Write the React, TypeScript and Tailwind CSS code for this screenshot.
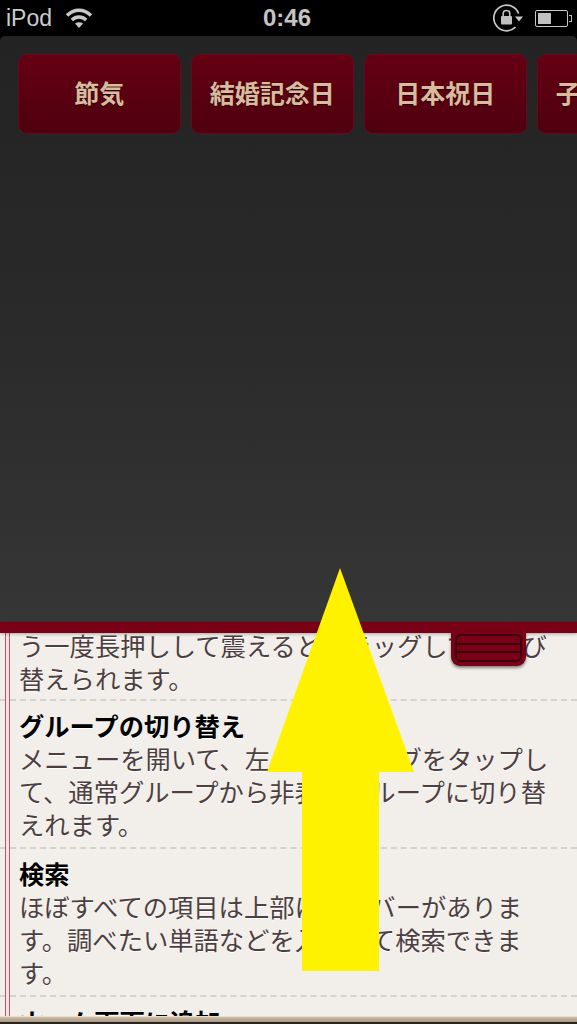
import React from "react";

const jp = "font-['Noto_Sans_CJK_JP','Liberation_Sans',sans-serif]";

const sections: { title?: string; lines: string[] }[] = [
  { lines: ["う一度長押しして震えるとドラッグして、並び", "替えられます。"] },
  {
    title: "グループの切り替え",
    lines: ["メニューを開いて、左上の表示タブをタップし", "て、通常グループから非表示グループに切り替", "えれます。"],
  },
  {
    title: "検索",
    lines: ["ほぼすべての項目は上部に検索バーがありま", "す。調べたい単語などを入力して検索できま", "す。"],
  },
  { title: "ホーム画面に追加", lines: [] },
];

function Wifi() {
  return (
    <svg width="28" height="22" viewBox="0 0 28 22" fill="none" stroke="#c8c8c8" strokeWidth="3.4">
      <path d="M2 8.5C9 1.5 19 1.5 26 8.5" />
      <path d="M6.8 13C11 9 17 9 21.2 13" />
      <path d="M14 21l-4-4.4c2.4-1.9 5.6-1.9 8 0z" fill="#c8c8c8" stroke="none" />
    </svg>
  );
}

function RotationLock() {
  return (
    <svg width="31" height="28" viewBox="0 0 31 28" fill="none">
      <path d="M22.5 23.2A12.8 12.8 0 1 1 25.6 9.5" stroke="#c8c8c8" strokeWidth="1.7" />
      <path d="M22 12.5h8l-4 5z" fill="#c8c8c8" />
      <rect x="8" y="12" width="11" height="8.5" rx="1" fill="#c0c0c0" />
      <path d="M10.2 12V9.8a3.3 3.3 0 0 1 6.6 0V12" stroke="#c0c0c0" strokeWidth="1.6" />
    </svg>
  );
}

function Battery() {
  return (
    <div className="flex items-center">
      <div className="w-[33px] h-[17px] border border-[#c8c8c8] rounded-[2px] p-[2px] flex">
        <div className="w-[13px] h-full bg-[#c0c0c0]" />
      </div>
      <div className="w-[3px] h-[7px] border border-l-0 border-[#bbbbbb] ml-[1px]" />
    </div>
  );
}

export default function App() {
  return (
    <div className="relative w-[577px] h-[1024px] overflow-hidden bg-black flex flex-col">
      {/* status bar */}
      <div className="h-[36px] shrink-0 flex items-center justify-between pl-[6px] pr-[5px] relative">
        <div className="flex items-center gap-[13px]">
          <span className="font-['Liberation_Sans',sans-serif] text-[23px] text-[#cccccc]">iPod</span>
          <Wifi />
        </div>
        <span className="absolute left-[263px] top-[4px] font-['Liberation_Sans',sans-serif] font-bold text-[24px] leading-[28px] text-[#c4c4c4]">0:46</span>
        <div className="flex items-center gap-[11px]">
          <RotationLock />
          <Battery />
        </div>
      </div>

      {/* drawer */}
      <div className="h-[586px] shrink-0 rounded-t-[5px] bg-gradient-to-b from-[#232323] via-[#2a2a2a] to-[#363636] pt-[18px] pl-[18px] flex gap-[10.5px] overflow-hidden items-start">
        {["節気", "結婚記念日", "日本祝日", "子供記念日"].map((label) => (
          <div
            key={label}
            className={`${jp} shrink-0 w-[162.5px] h-[80px] pb-[2px] rounded-[9px] border border-[#660a1c] bg-gradient-to-b from-[#650013] to-[#4f000f] flex items-center justify-center text-[25px] font-bold text-[#d8bc9e] [text-shadow:0_1px_1px_#2a0008]`}
          >
            {label}
          </div>
        ))}
      </div>

      {/* red bar */}
      <div className="h-[11px] shrink-0 bg-[#7a0016] relative z-10 shadow-[0_1px_3px_rgba(0,0,0,0.3)]" />

      {/* content */}
      <div className="flex-1 min-h-0 overflow-hidden relative bg-[#f2eeea]">
        <div className="absolute left-[5px] top-0 bottom-0 w-[5px] border-x border-[#b8566a] bg-[#efe3e1]" />
        <div className={`${jp} -mt-[4px] text-[25.3px] leading-[33px] text-[#4d3f3f] [text-shadow:0_1px_0_#ffffff]`}>
          {sections.map((s, i) => (
            <div
              key={i}
              className={`pl-[19px] whitespace-nowrap ${i === 0 ? "pb-[4px]" : "pt-[8px] pb-[6px]"} ${
                i < sections.length - 1 ? "border-b-2 border-dashed border-[#d6d2ce]" : ""
              }`}
            >
              {s.title && <div className="font-bold text-black">{s.title}</div>}
              {s.lines.map((l) => (
                <div key={l}>{l}</div>
              ))}
            </div>
          ))}
        </div>
      </div>

      {/* bottom edge */}
      <div className="h-[8px] shrink-0 bg-gradient-to-b from-[#cdbca6] to-[#a8977f] border-t border-[#e6dccd] border-b-2 border-b-[#2a2420]" />

      {/* drag handle */}
      <div className="absolute left-[451px] top-[630px] z-20 w-[75px] h-[36px] rounded-b-[9px] bg-[#7a0016] shadow-[0_2px_3px_rgba(0,0,0,0.45)] px-[4px] pt-[4px]">
        <div className="h-[28px] rounded-[5px] border-2 border-[#3a0010] flex flex-col justify-evenly">
          <div className="h-[2px] bg-[#3a0010]" />
          <div className="h-[2px] bg-[#3a0010]" />
        </div>
      </div>

      {/* arrow */}
      <svg className="absolute left-0 top-0 z-30" width="577" height="1024" viewBox="0 0 577 1024">
        <polygon points="340,568 414,772 379,772 379,971 302,971 302,772 267,772" fill="#fff200" />
      </svg>
    </div>
  );
}
